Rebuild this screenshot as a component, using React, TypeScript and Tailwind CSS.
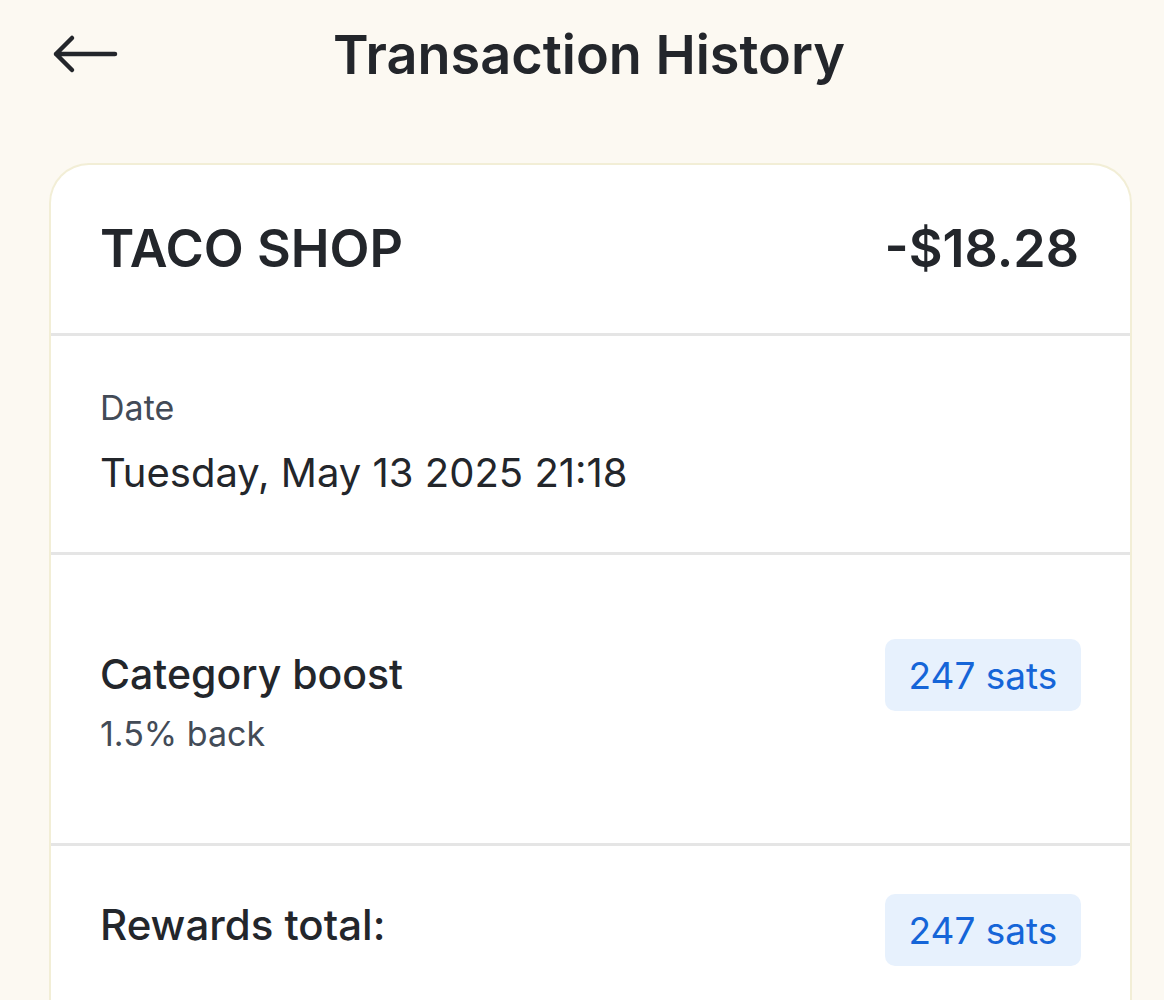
import React from 'react';

function BackArrow() {
  return (
    <svg width="66" height="40" viewBox="0 0 66 40" fill="none" className="text-[#23262b]">
      <path d="M20 4 L4 20 L20 36 M4 20 H63" stroke="currentColor" strokeWidth="4.5" strokeLinecap="round" strokeLinejoin="round" />
    </svg>
  );
}

function SatsBadge({ amount }: { amount: number }) {
  return (
    <div className="h-[72px] w-[196px] rounded-[10px] bg-[#e7f1fd] flex items-center justify-center text-[37px] text-[#1565d8] leading-none">
      {amount} sats
    </div>
  );
}

export default function App() {
  return (
    <div className="min-h-screen bg-[#fcf9f2] font-['Inter',sans-serif] text-[#23262b]">
      <header className="relative h-[110px] flex items-center justify-center pl-[14px]">
        <button className="absolute left-[52px] top-[34px]">
          <BackArrow />
        </button>
        <h1 className="text-[54px] font-semibold leading-none">Transaction History</h1>
      </header>

      <div className="ml-[49px] mr-[32px] mt-[53px] rounded-t-[40px] border-2 border-b-0 border-[#f2eed6] bg-white overflow-hidden">
        <div className="h-[168px] flex items-center justify-between pl-[49px] pr-[51px]">
          <span className="text-[52px] font-semibold leading-none">TACO SHOP</span>
          <span className="text-[52px] font-semibold leading-none">-$18.28</span>
        </div>
        <div className="h-[3px] bg-[#e5e5e5]" />

        <div className="h-[216px] flex flex-col justify-center pl-[49px] pb-[4px]">
          <span className="text-[34px] text-[#434b57] leading-none">Date</span>
          <span className="mt-[28px] text-[40px] leading-none">Tuesday, May 13 2025 21:18</span>
        </div>
        <div className="h-[3px] bg-[#e5e5e5]" />

        <div className="h-[288px] flex items-start justify-between pl-[49px] pr-[49px] pt-[84px]">
          <div className="flex flex-col">
            <span className="mt-[15px] text-[41px] font-medium leading-none">Category boost</span>
            <span className="mt-[22px] text-[34px] text-[#434b57] leading-none">1.5% back</span>
          </div>
          <SatsBadge amount={247} />
        </div>
        <div className="h-[3px] bg-[#e5e5e5]" />

        <div className="h-[160px] flex items-start justify-between pl-[49px] pr-[49px] pt-[48px]">
          <span className="mt-[10px] text-[42px] font-medium leading-none">Rewards total:</span>
          <SatsBadge amount={247} />
        </div>
      </div>
    </div>
  );
}
